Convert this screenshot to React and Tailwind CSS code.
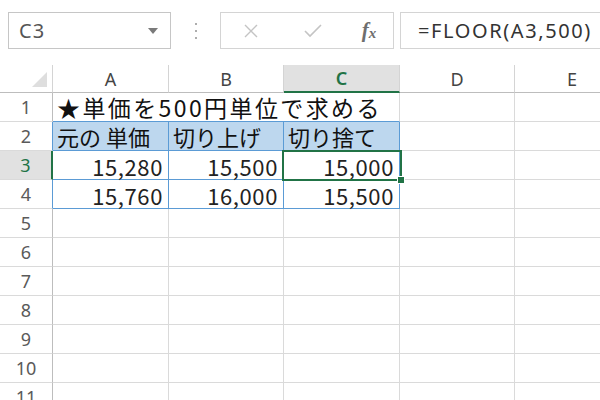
import React from "react";

const tableRows = [
  { n: 3, a: "15,280", b: "15,500", c: "15,000" },
  { n: 4, a: "15,760", b: "16,000", c: "15,500" },
];

const emptyRows = [5, 6, 7, 8, 9, 10, 11];

function Toolbar() {
  return (
    <div className="h-[65px] flex items-start pt-[12px]">
      {/* name box */}
      <div className="ml-[8px] w-[163px] h-[37px] border border-[#c6c6c6] flex items-center justify-between pl-[10px] pr-[12px]">
        <span className="text-[20px] leading-none text-[#555] font-['Noto_Sans',sans-serif] tracking-[1px]">C3</span>
        <span className="w-0 h-0 border-l-[5px] border-r-[5px] border-t-[6px] border-l-transparent border-r-transparent border-t-[#7a7a7a]" />
      </div>
      {/* vertical dots */}
      <div className="w-[49px] h-[37px] flex flex-col items-center justify-center gap-[5px]">
        <span className="w-[2px] h-[2px] bg-[#adadad]" />
        <span className="w-[2px] h-[2px] bg-[#adadad]" />
        <span className="w-[2px] h-[2px] bg-[#adadad]" />
      </div>
      {/* cancel / enter / fx */}
      <div className="w-[174px] h-[37px] border border-[#d4d4d4] flex items-center">
        <div className="w-[60px] flex justify-center">
          <svg width="14" height="14" viewBox="0 0 14 14">
            <path d="M1 1L13 13M13 1L1 13" stroke="#c4c4c4" strokeWidth="1.4" fill="none" />
          </svg>
        </div>
        <div className="w-[64px] flex justify-center">
          <svg width="18" height="14" viewBox="0 0 18 14">
            <path d="M1 7L6 12L17 1" stroke="#c4c4c4" strokeWidth="1.6" fill="none" />
          </svg>
        </div>
        <div className="w-[48px] flex justify-center items-end font-['Liberation_Serif',serif] italic text-[#6e6e6e]">
          <span className="text-[21px] font-bold leading-none">f</span>
          <span className="text-[15px] font-bold leading-none">x</span>
        </div>
      </div>
      {/* formula input */}
      <div className="ml-[6px] flex-1 h-[37px] border border-r-0 border-[#d4d4d4] flex items-center pl-[17px]">
        <span className="text-[20px] leading-none text-[#333] font-['Noto_Sans',sans-serif] tracking-[1.6px]">=FLOOR(A3,500)</span>
      </div>
    </div>
  );
}

function RowHead({ n, selected, blue }) {
  return (
    <div
      className={`h-[29px] border-b border-[#dadada] flex items-center justify-center text-[18px] leading-none font-['Noto_Sans',sans-serif] ${
        selected
          ? "bg-[#e1e1e1] text-[#217346] border-r-2 border-r-[#217346]"
          : blue
          ? "text-[#5a5a5a] border-r border-r-[#5b9bd5]"
          : "text-[#5a5a5a] border-r border-r-[#bdbdbd]"
      }`}
    >
      {n}
    </div>
  );
}

function Sheet() {
  return (
    <div className="relative grid grid-cols-[53px_116px_115px_116px_115px_115px] text-[#111]">
      {/* column headers */}
      <div className="h-[28px] border-r border-b border-r-[#d4d4d4] border-b-[#bdbdbd] flex items-end justify-end pr-[5px] pb-[5px]">
        <span className="w-0 h-0 border-l-[15px] border-t-[15px] border-l-transparent border-t-transparent border-b-0 border-r-[15px] border-r-[#dedede]" />
      </div>
      {["A", "B", "C", "D", "E"].map((c) =>
        c === "C" ? (
          <div
            key={c}
            className="h-[28px] bg-[#e1e1e1] border-r border-r-[#d4d4d4] border-b-2 border-b-[#217346] flex items-center justify-center text-[18px] leading-none font-['Noto_Sans',sans-serif] font-semibold text-[#217346]"
          >
            {c}
          </div>
        ) : (
          <div
            key={c}
            className="h-[28px] border-r border-b border-r-[#d4d4d4] border-b-[#bdbdbd] flex items-center justify-center text-[18px] leading-none font-['Noto_Sans',sans-serif] text-[#444]"
          >
            {c}
          </div>
        )
      )}

      {/* row 1 */}
      <RowHead n={1} />
      <div className="col-span-3 h-[29px] border-r border-b border-r-[#dadada] border-b-[#5b9bd5] flex items-center pl-[4px] text-[23px] leading-none tracking-[2.4px] whitespace-nowrap">
        ★単価を500円単位で求める
      </div>
      <div className="h-[29px] border-r border-b border-[#dadada]" />
      <div className="h-[29px] border-r border-b border-[#dadada]" />

      {/* row 2: table header */}
      <RowHead n={2} blue />
      {["元の 単価", "切り上げ", "切り捨て"].map((t) => (
        <div
          key={t}
          className="h-[29px] bg-[#bdd7ee] border-r border-b border-[#5b9bd5] flex items-center pl-[4px] text-[22px] leading-none whitespace-nowrap"
        >
          {t}
        </div>
      ))}
      <div className="h-[29px] border-r border-b border-[#dadada]" />
      <div className="h-[29px] border-r border-b border-[#dadada]" />

      {/* rows 3-4 */}
      {tableRows.map((r) => (
        <React.Fragment key={r.n}>
          <RowHead n={r.n} selected={r.n === 3} blue />
          {[r.a, r.b, r.c].map((v, i) => (
            <div
              key={i}
              className="h-[29px] border-r border-b border-[#5b9bd5] flex items-center justify-end pr-[5px] pt-[2px] text-[22px] leading-none tracking-[0.6px] text-[#222] whitespace-nowrap"
            >
              {v}
            </div>
          ))}
          <div className="h-[29px] border-r border-b border-[#dadada]" />
          <div className="h-[29px] border-r border-b border-[#dadada]" />
        </React.Fragment>
      ))}

      {/* empty rows */}
      {emptyRows.map((n) => (
        <React.Fragment key={n}>
          <RowHead n={n} />
          <div className="h-[29px] border-r border-b border-[#dadada]" />
          <div className="h-[29px] border-r border-b border-[#dadada]" />
          <div className="h-[29px] border-r border-b border-[#dadada]" />
          <div className="h-[29px] border-r border-b border-[#dadada]" />
          <div className="h-[29px] border-r border-b border-[#dadada]" />
        </React.Fragment>
      ))}

      {/* active cell C3 */}
      <div className="absolute left-[282px] top-[85px] w-[120px] h-[31px] border-2 border-[#217346] pointer-events-none">
        <span className="absolute right-[-5px] bottom-[-5px] w-[8px] h-[8px] bg-[#217346] border border-white" />
      </div>
    </div>
  );
}

export default function App() {
  return (
    <div className="w-[600px] h-[400px] overflow-hidden bg-white font-['Noto_Sans_CJK_JP',sans-serif]">
      <Toolbar />
      <Sheet />
    </div>
  );
}
